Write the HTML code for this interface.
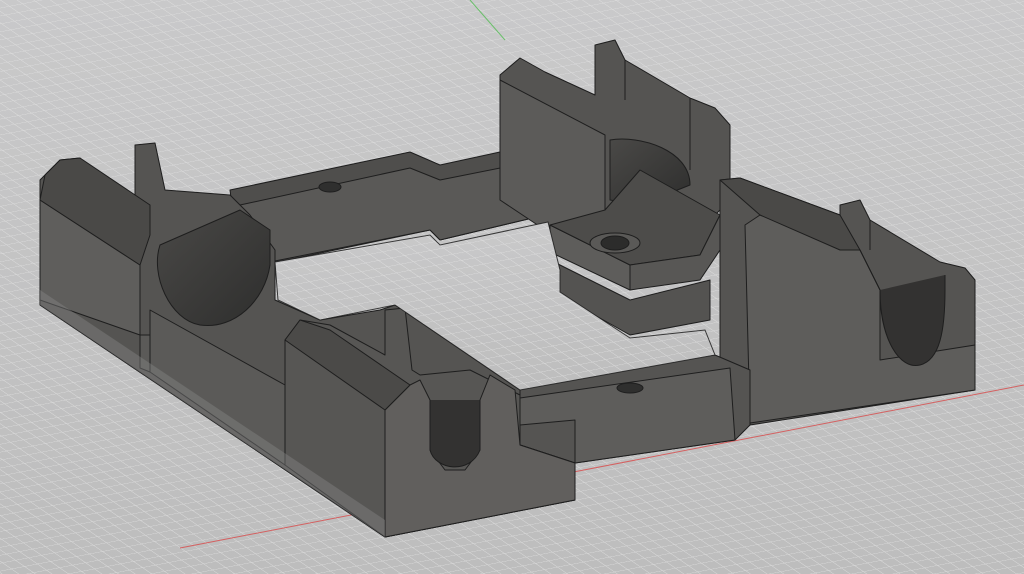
<!DOCTYPE html>
<html><head><meta charset="utf-8"><style>html,body{margin:0;padding:0;background:#c6c6c6;overflow:hidden}svg{display:block}</style></head>
<body>
<svg width="1024" height="574" viewBox="0 0 1024 574" xmlns="http://www.w3.org/2000/svg">
<defs>
<linearGradient id="bg" x1="0" y1="0" x2="0" y2="1"><stop offset="0" stop-color="#c9c9ca"/><stop offset="1" stop-color="#bdbdbd"/></linearGradient>
<pattern id="grid" width="100" height="100" patternUnits="userSpaceOnUse" patternTransform="matrix(0.13,-0.025,0.09,0.062,0,0)">
<path d="M0 0H100" stroke="#e4e4e4" stroke-width="9" fill="none"/>
<path d="M0 0V100" stroke="#e4e4e4" stroke-width="9" fill="none"/>
</pattern>
<linearGradient id="cyl" x1="0" y1="0" x2="1" y2="1"><stop offset="0" stop-color="#4a4947"/><stop offset="1" stop-color="#2e2e2d"/></linearGradient>
</defs>
<rect width="1024" height="574" fill="url(#bg)"/>
<rect width="1024" height="574" fill="url(#grid)" opacity="0.85"/>
<line x1="180" y1="548" x2="1024" y2="385" stroke="#d46060" stroke-width="1"/>
<line x1="470" y1="0" x2="505" y2="40" stroke="#6cbf6c" stroke-width="1"/>

<g stroke="#1e1e1e" stroke-width="1" stroke-linejoin="round">
<polygon points="230,190 410,152 440,165 500,152 545,175 545,215 440,240 430,230 240,270" fill="#4f4e4c"/>
<polygon points="240,205 410,168 440,180 540,160 545,215 440,240 430,230 270,262" fill="#5a5957"/>
<polygon points="500,75 520,58 545,72 595,95 595,45 615,40 625,60 690,98 715,108 730,125 730,200 700,230 600,215 560,240 545,230 500,170" fill="#555452"/>
<polygon points="500,80 605,135 605,215 560,240 500,200" fill="#5c5b59"/>
<path d="M605,135 L605,215 M595,95 L595,45 M625,60 L625,100 M690,98 L690,170" fill="none"/>
<path d="M610,140 C640,135 690,150 690,185 L640,205 L610,200 Z" fill="url(#cyl)"/>
<polygon points="720,180 740,178 840,215 840,205 860,200 870,220 940,262 965,268 975,280 975,390 750,425 745,400 720,370" fill="#555452"/>
<polygon points="745,225 760,215 840,245 860,250 880,290 880,360 975,345 975,390 750,423" fill="#5e5d5b"/>
<path d="M860,250 L880,290 L880,360 M870,220 L870,250" fill="none"/>
<path d="M880,290 C880,340 900,370 920,365 C940,360 945,330 945,290 L945,275" fill="#333231"/>
<polygon points="760,215 840,250 860,250 840,215 740,178 720,180" fill="#4a4947"/>
<polygon points="550,260 550,290 630,335 710,320 710,280 630,300" fill="#545351"/>
<polygon points="550,225 630,265 630,290 550,252" fill="#5e5d5b"/>
<polygon points="550,225 605,210 640,170 720,215 700,255 630,265" fill="#4d4c4a"/>
<polygon points="630,265 700,255 720,215 720,250 700,280 630,290" fill="#585755"/>
<ellipse cx="615" cy="243" rx="25" ry="10" fill="#5a5957"/>
<ellipse cx="615" cy="243" rx="14" ry="7" fill="#2c2c2b"/>
<polygon points="500,380 715,355 750,370 750,425 735,440 575,463 520,445 515,395" fill="#555452"/>
<polygon points="520,398 730,368 735,440 575,463 575,420 520,425" fill="#5e5d5b"/>
<ellipse cx="630" cy="388" rx="13" ry="5" fill="#2f2f2e"/>
<polygon points="40,180 60,160 80,158 95,185 135,200 135,145 155,143 165,190 230,195 250,215 275,250 275,300 320,320 380,310 395,305 520,390 520,445 575,463 575,500 385,537 40,305" fill="#555452"/>
<polygon points="40,200 140,265 140,335 40,300" fill="#5f5e5c"/>
<polygon points="40,200 45,175 60,160 80,158 150,205 150,235 140,265" fill="#4a4947"/>
<path d="M160,245 C150,275 170,320 200,325 C235,330 265,300 270,265 L270,230 L240,210 Z" fill="url(#cyl)"/>
<polygon points="150,310 285,385 285,465 150,372" fill="#5b5a58"/>
<polygon points="140,335 150,335 150,372 140,368" fill="#5b5a58"/>
<polygon points="285,340 300,320 330,325 385,355 385,310 405,308 412,370 420,375 470,370 500,385 520,395 520,445 575,463 575,500 385,537 285,465" fill="#575654"/>
<polygon points="385,410 410,385 420,380 430,400 430,450 445,470 465,470 480,450 480,400 490,375 515,390 520,445 575,463 575,500 385,537" fill="#615f5d"/>
<path d="M430,400 L430,450 C435,470 470,475 480,450 L480,400" fill="#333231"/>
<polygon points="285,340 385,410 410,385 330,330 300,320" fill="#4b4a48"/>
<path d="M385,410 L385,537 M150,310 L150,372 M40,305 L385,537 M575,463 L575,500" fill="none"/>
<ellipse cx="330" cy="187" rx="11" ry="5" fill="#2f2f2e"/>
</g>
<polygon points="40,290 385,520 385,537 40,305" fill="#8a8a8a" opacity="0.4"/>
<polygon points="275,262 430,235 440,245 548,222 560,270 560,292 630,338 705,330 715,355 520,390 395,305 320,320 278,300" fill="url(#bg)"/>
<polygon points="275,262 430,235 440,245 548,222 560,270 560,292 630,338 705,330 715,355 520,390 395,305 320,320 278,300" fill="url(#grid)" opacity="0.85" stroke="#1e1e1e" stroke-width="1"/>
</svg>
</body></html>
